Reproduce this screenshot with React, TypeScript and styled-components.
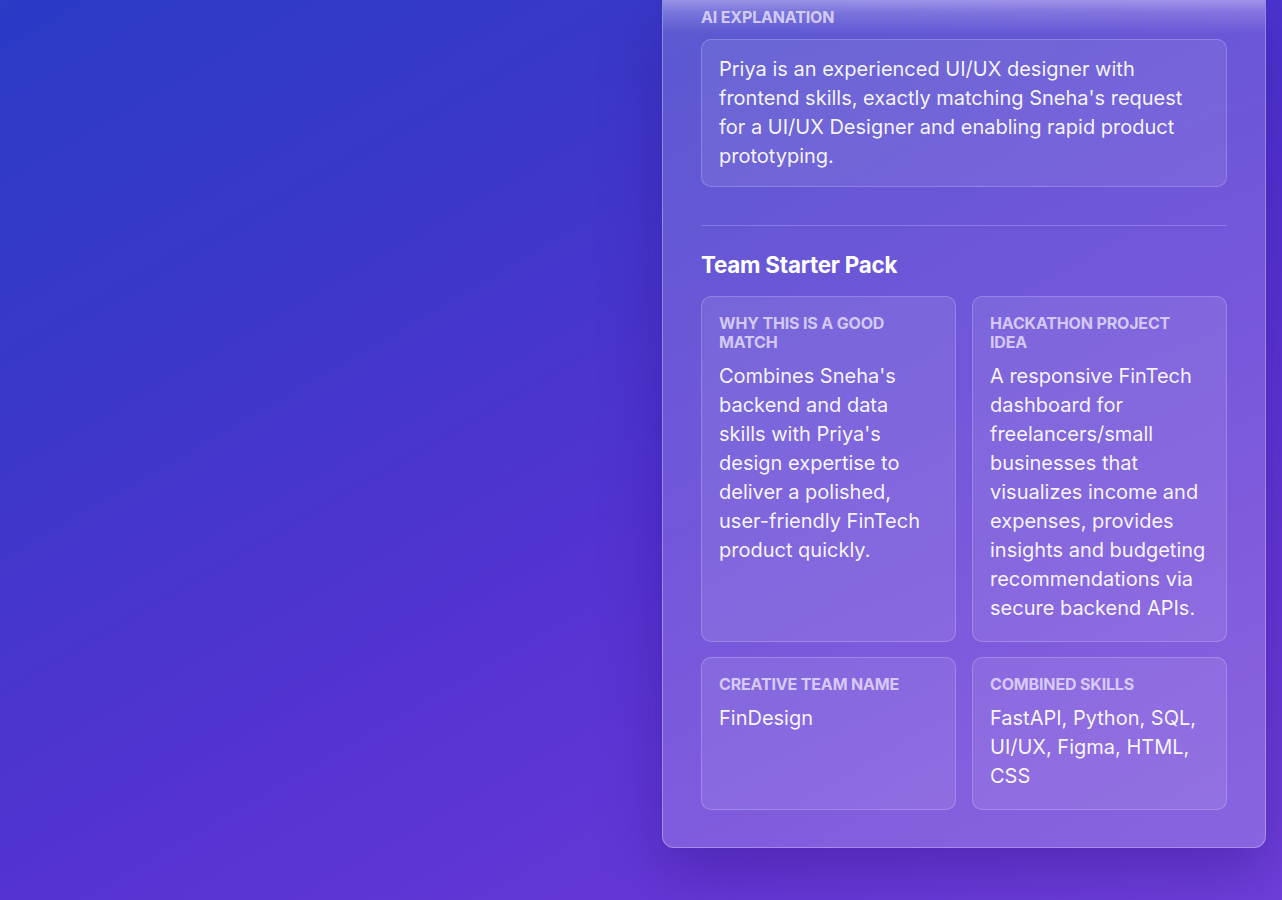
import React from "react";
import styled, { createGlobalStyle } from "styled-components";

const GlobalStyle = createGlobalStyle`
  html, body {
    margin: 0;
    padding: 0;
  }
  body {
    font-family: Inter, "Noto Sans", "Liberation Sans", sans-serif;
    background: linear-gradient(150deg, #2a3bc6 0%, #3a38c8 25%, #5433d2 55%, #6638d6 80%, #6f40da 100%);
    min-height: 900px;
    overflow: hidden;
  }
  * { box-sizing: border-box; }
`;

const Page = styled.div`
  display: flex;
  justify-content: flex-end;
  padding: 0 16px 0 0;
  min-height: 900px;
`;

const Panel = styled.section`
  position: relative;
  width: 604px;
  align-self: flex-start;
  padding: 8px 38px 37px;
  background: linear-gradient(160deg, rgba(255, 255, 255, 0.17) 0%, rgba(255, 255, 255, 0.18) 60%, rgba(255, 255, 255, 0.2) 100%);
  border: 1px solid rgba(255, 255, 255, 0.3);
  border-top: none;
  border-radius: 0 0 12px 12px;
  box-shadow: 0 24px 60px rgba(40, 10, 120, 0.35);
  color: #fff;

  &::before {
    content: "";
    position: absolute;
    left: 0;
    right: 0;
    top: 0;
    height: 34px;
    background: linear-gradient(180deg, rgba(230, 220, 255, 0.45) 0%, rgba(230, 220, 255, 0.22) 35%, rgba(230, 220, 255, 0) 100%);
    pointer-events: none;
  }
`;

const Label = styled.h4`
  position: relative;
  margin: 0;
  font-size: 16px;
  line-height: 19px;
  font-weight: 700;
  text-transform: uppercase;
  letter-spacing: -0.01em;
  color: rgba(236, 228, 255, 0.8);
`;

const ExplainBox = styled.div`
  margin-top: 12px;
  padding: 15px 17px;
  background: rgba(255, 255, 255, 0.08);
  border: 1px solid rgba(255, 255, 255, 0.2);
  border-radius: 10px;
`;

const Body = styled.p`
  margin: 0;
  font-size: 20px;
  line-height: 29px;
  font-weight: 400;
  color: rgba(255, 255, 255, 0.95);
`;

const Divider = styled.hr`
  margin: 38px 0 0;
  border: none;
  height: 1px;
  background: rgba(255, 255, 255, 0.2);
`;

const SectionTitle = styled.h3`
  margin: 26px 0 18px;
  font-size: 22.4px;
  line-height: 26px;
  font-weight: 700;
  letter-spacing: -0.01em;
  color: #fff;
`;

const Grid = styled.div`
  display: grid;
  grid-template-columns: 1fr 1fr;
  column-gap: 16px;
  row-gap: 15px;
`;

const Card = styled.div`
  padding: 17px 17px 18px;
  background: rgba(255, 255, 255, 0.09);
  border: 1px solid rgba(255, 255, 255, 0.2);
  border-radius: 10px;
  display: flex;
  flex-direction: column;
  gap: 10px;
`;

const items = [
  {
    label: "Why this is a good match",
    text: "Combines Sneha's backend and data skills with Priya's design expertise to deliver a polished, user-friendly FinTech product quickly.",
  },
  {
    label: "Hackathon project idea",
    text: "A responsive FinTech dashboard for freelancers/small businesses that visualizes income and expenses, provides insights and budgeting recommendations via secure backend APIs.",
  },
  { label: "Creative team name", text: "FinDesign" },
  { label: "Combined skills", text: "FastAPI, Python, SQL, UI/UX, Figma, HTML, CSS" },
];

export default function App() {
  return (
    <>
      <GlobalStyle />
      <Page>
        <Panel>
          <Label>AI Explanation</Label>
          <ExplainBox>
            <Body>
              Priya is an experienced UI/UX designer with frontend skills, exactly matching Sneha's request for a
              UI/UX Designer and enabling rapid product prototyping.
            </Body>
          </ExplainBox>
          <Divider />
          <SectionTitle>Team Starter Pack</SectionTitle>
          <Grid>
            {items.map((it) => (
              <Card key={it.label}>
                <Label>{it.label}</Label>
                <Body>{it.text}</Body>
              </Card>
            ))}
          </Grid>
        </Panel>
      </Page>
    </>
  );
}
